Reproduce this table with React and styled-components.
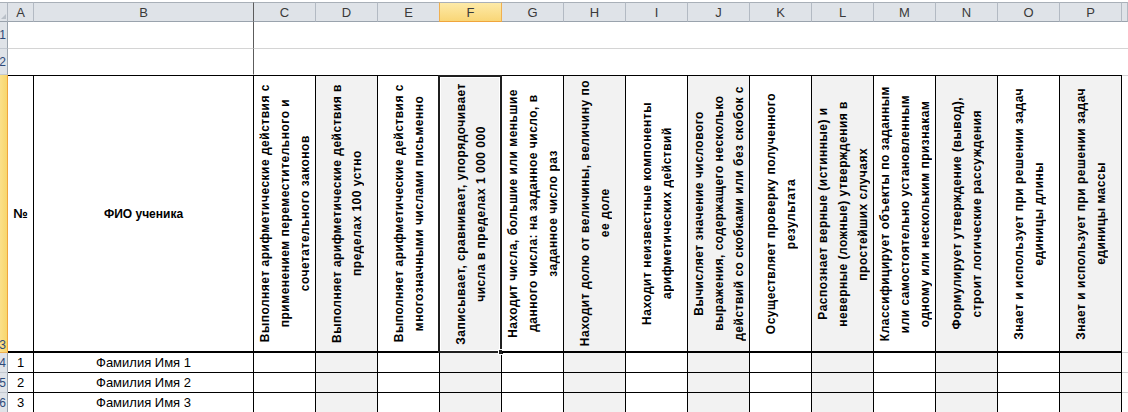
import React from "react";
import styled, { createGlobalStyle, css } from "styled-components";

const GlobalStyle = createGlobalStyle`
  html, body { margin: 0; padding: 0; background: #ffffff; overflow: hidden; }
  #root { width: 1128px; height: 412px; overflow: hidden; }
`;

const FONT = `"Liberation Sans", Arial, sans-serif`;

const Sheet = styled.div`
  display: grid;
  grid-template-columns: 8px 26px 220px repeat(14, 62px) 1fr;
  grid-template-rows: 20px 27px 26px 278px 20px 20px 20px;
  padding-top: 2px;
  width: 1128px;
  font-family: ${FONT};
  color: #000;
  box-sizing: border-box;
  & > * { box-sizing: border-box; }
`;

const Corner = styled.div`
  background: #dfe3e8;
  border-top: 1px solid #a9b0b8;
  border-bottom: 1px solid #9aa3ad;
  border-right: 1px solid #b0b7c0;
  position: relative;
  &::after {
    content: "";
    position: absolute;
    right: 1px;
    bottom: 2px;
    border-left: 5px solid transparent;
    border-bottom: 5px solid #b9c0c8;
  }
`;

const ColHeader = styled.div`
  background: #dfe3e8;
  border-top: 1px solid #a9b0b8;
  border-bottom: 1px solid #9aa3ad;
  border-right: 1px solid ${(p) => (p.$freeze ? "#5c5c5c" : "#b3bac3")};
  font-size: 13px;
  color: #3a3a3a;
  display: flex;
  align-items: center;
  justify-content: center;
  padding-top: 1px;
  ${(p) =>
    p.$active &&
    css`
      background: linear-gradient(#fdeaa8, #f9d677);
      border-bottom: 1px solid #f0a53c;
      border-right: 1px solid #f0b050;
      border-left: 1px solid #f0b050;
      margin-left: -1px;
    `}
`;

const RowHeader = styled.div`
  background: ${(p) => (p.$active ? "linear-gradient(90deg, #fbe08a, #f8d66c)" : "#dfe3e8")};
  border-right: 1px solid ${(p) => (p.$active ? "#f0a53c" : "#9aa3ad")};
  border-bottom: 1px solid ${(p) => (p.$active ? "#f0b050" : "#c3c9d1")};
  overflow: hidden;
  display: flex;
  justify-content: flex-end;
  align-items: ${(p) => (p.$bottom ? "flex-end" : "center")};
  padding-right: 1px;
  font-size: 12px;
  color: #2c4a7a;
  line-height: 14px;
`;

const BlankCell = styled.div`
  grid-column: span ${(p) => p.$span};
  background: #fff;
  border-bottom: 1px solid ${(p) => (p.$line ? "#d4d4d4" : "transparent")};
  border-right: ${(p) => (p.$freeze ? "1px solid #5c5c5c" : "none")};
`;

const HeadCell = styled.div`
  position: relative;
  background: ${(p) => (p.$shade ? "#f2f2f2" : "#ffffff")};
  border-top: 1px solid #000;
  border-right: 1px solid #000;
  border-bottom: 2px solid #000;
  display: flex;
  align-items: center;
  justify-content: center;
  overflow: ${(p) => (p.$selected ? "visible" : "hidden")};
  font-size: ${(p) => (p.$big ? "13px" : "12px")};
  font-weight: bold;
`;

const EdgeCell = styled.div`
  border-top: 1px solid #d4d4d4;
  border-bottom: 1px solid #d4d4d4;
`;

const Rotated = styled.div`
  writing-mode: vertical-rl;
  transform: rotate(180deg);
  white-space: nowrap;
  text-align: center;
  font-family: ${FONT};
  font-weight: bold;
  font-size: 12px;
  line-height: 20px;
  letter-spacing: 0.5px;
`;

const Selection = styled.div`
  position: absolute;
  left: -2px;
  top: -1px;
  right: -1px;
  bottom: -2px;
  border: 2px solid #1f1f1f;
  box-shadow: inset 0 0 0 1px #ffffff;
  pointer-events: none;
`;

const FillHandle = styled.div`
  position: absolute;
  right: -4px;
  bottom: -4px;
  width: 6px;
  height: 6px;
  background: #1f1f1f;
  border: 1px solid #ffffff;
  box-sizing: border-box;
`;

const DataCell = styled.div`
  background: ${(p) => (p.$shade ? "#f2f2f2" : "#ffffff")};
  border-right: 1px solid #000;
  border-bottom: 1px solid #000;
  display: flex;
  align-items: center;
  justify-content: center;
  font-size: 13px;
  line-height: 16px;
  padding-top: 1px;
`;

const EdgeData = styled.div`
  border-bottom: 1px solid #d4d4d4;
`;

const columns = ["A", "B", "C", "D", "E", "F", "G", "H", "I", "J", "K", "L", "M", "N", "O", "P"];

const headers = [
  ["Выполняет арифметические действия с", "применением переместительного и", "сочетательного законов"],
  ["Выполняет арифметические действия в", "пределах 100 устно"],
  ["Выполняет арифметические действия с", "многозначными числами письменно"],
  ["Записывает, сравнивает, упорядочивает", "числа в пределах 1 000 000"],
  ["Находит числа, большие или меньшие", "данного числа: на заданное число, в", "заданное число раз"],
  ["Находит долю от величины, величину по", "ее доле"],
  ["Находит неизвестные компоненты", "арифметических действий"],
  ["Вычисляет значение числового", "выражения, содержащего несколько", "действий со скобками или без скобок с"],
  ["Осуществляет проверку полученного", "результата"],
  ["Распознает верные (истинные) и", "неверные (ложные) утверждения в", "простейших случаях"],
  ["Классифицирует объекты по заданным", "или самостоятельно установленным", "одному или нескольким признакам"],
  ["Формулирует утверждение (вывод),", "строит логические рассуждения"],
  ["Знает и использует при решении задач", "единицы длины"],
  ["Знает и использует при решении задач", "единицы массы"],
];

const students = ["Фамилия Имя 1", "Фамилия Имя 2", "Фамилия Имя 3"];

export default function App() {
  return (
    <>
      <GlobalStyle />
      <Sheet>
        <Corner />
        {columns.map((c) => (
          <ColHeader key={c} $active={c === "F"} $freeze={c === "B"}>
            {c}
          </ColHeader>
        ))}
        <ColHeader />

        <RowHeader>1</RowHeader>
        <BlankCell $span={2} $line $freeze />
        <BlankCell $span={15} $line />

        <RowHeader>2</RowHeader>
        <BlankCell $span={2} $freeze />
        <BlankCell $span={15} />

        <RowHeader $active $bottom>3</RowHeader>
        <HeadCell $big>№</HeadCell>
        <HeadCell>ФИО ученика</HeadCell>
        {headers.map((lines, i) => (
          <HeadCell key={i} $shade={i % 2 === 1} $selected={i === 3}>
            <Rotated>
              {lines.map((l, j) => (
                <React.Fragment key={j}>
                  {j > 0 && <br />}
                  {l}
                </React.Fragment>
              ))}
            </Rotated>
            {i === 3 && (
              <Selection>
                <FillHandle />
              </Selection>
            )}
          </HeadCell>
        ))}
        <EdgeCell />

        {students.map((s, r) => (
          <React.Fragment key={s}>
            <RowHeader>{r + 4}</RowHeader>
            <DataCell>{r + 1}</DataCell>
            <DataCell>{s}</DataCell>
            {headers.map((_, i) => (
              <DataCell key={i} $shade={i % 2 === 1} />
            ))}
            <EdgeData />
          </React.Fragment>
        ))}
      </Sheet>
    </>
  );
}
